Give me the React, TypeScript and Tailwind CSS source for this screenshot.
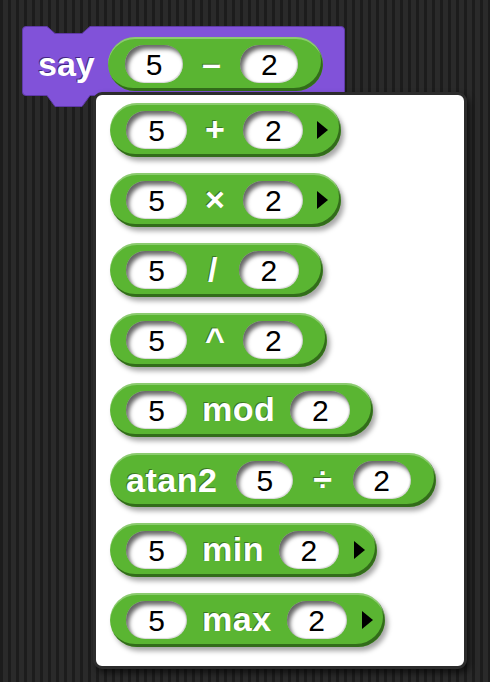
import type { ReactNode } from 'react'

function Slot({ v, w = 'w-[61px]' }: { v: string; w?: string }) {
  return (
    <div
      className={`flex h-[38px] ${w} shrink-0 items-center justify-center rounded-full bg-white pt-[1px] text-[30px] leading-none text-black shadow-[inset_3px_4px_4px_rgba(0,0,0,0.6),inset_-1px_-1px_1px_rgba(0,0,0,0.15)]`}
    >
      {v}
    </div>
  )
}

function Label({ children }: { children: ReactNode }) {
  return (
    <span className="text-[34px] font-bold leading-none tracking-[0.5px] text-white [text-shadow:-1px_-1px_0_rgba(0,0,0,0.35)]">
      {children}
    </span>
  )
}

function Arrow() {
  return (
    <svg width="11" height="18" viewBox="0 0 11 18" className="shrink-0">
      <polygon points="0,0 11,9 0,18" fill="#000" />
    </svg>
  )
}

function Reporter({ children, className = '' }: { children: ReactNode; className?: string }) {
  return (
    <div
      className={`flex h-[54px] w-fit items-center rounded-full bg-[#5ab532] shadow-[inset_0_2px_0_rgba(255,255,255,0.3),inset_-2px_-3px_0_rgba(40,90,20,0.8),3px_4px_5px_rgba(0,0,0,0.35)] ${className}`}
    >
      {children}
    </div>
  )
}

function SayBlock() {
  return (
    <div className="relative h-[80px] w-[323px]">
      <svg width="323" height="82" viewBox="0 0 323 82" className="absolute left-0 top-0">
        <path
          d="M0.5,4 Q0.5,0.5 4,0.5 L25,0.5 L33,7.5 L60,7.5 L68,0.5 L319,0.5 Q322.5,0.5 322.5,4 L322.5,66 Q322.5,69.5 319,69.5 L68,69.5 L60,80.5 L33,80.5 L25,69.5 L4,69.5 Q0.5,69.5 0.5,66 Z"
          fill="#8152d9"
          stroke="#5f3aa8"
          strokeWidth="1"
        />
      </svg>
      <div className="relative flex items-center pl-[16px] pt-[11px]">
        <span className="w-[70px] text-[34px] font-bold leading-none text-white [text-shadow:-1px_-1px_0_rgba(60,30,120,0.9)]">
          say
        </span>
        <Reporter className="h-[53px] pl-[17px] pr-[25px] shadow-[inset_0_2px_0_rgba(255,255,255,0.3),inset_-2px_-3px_0_rgba(40,90,20,0.8)]">
          <Slot v="5" w="w-[58px]" />
          <span className="mx-[19px]">
            <Label>–</Label>
          </span>
          <Slot v="2" w="w-[58px]" />
        </Reporter>
      </div>
    </div>
  )
}

export default function App() {
  return (
    <div className="relative h-[682px] w-[490px] overflow-hidden bg-[repeating-linear-gradient(90deg,#1c1c1c_0px,#1c1c1c_3px,#2a2a2a_3px,#2a2a2a_8px)] pl-[22px] pt-[26px] font-['Liberation_Sans',Arial,sans-serif]">
      <SayBlock />

      {/* palette menu */}
      <div className="absolute left-[93px] top-[92px] h-[577px] w-[374px] rounded-[9px] border-[3px] border-[#2c2c2c] bg-white shadow-[3px_4px_6px_rgba(0,0,0,0.6)]">
        <div className="flex flex-col gap-[16px] pl-[14px] pt-[8px]">
          <Reporter className="pl-[16px] pr-[13px]">
            <Slot v="5" />
            <span className="mx-[18px]"><Label>+</Label></span>
            <Slot v="2" w="w-[60px]" />
            <span className="ml-[14px]"><Arrow /></span>
          </Reporter>
          <Reporter className="pl-[16px] pr-[13px]">
            <Slot v="5" />
            <span className="mx-[18px]"><Label>×</Label></span>
            <Slot v="2" w="w-[60px]" />
            <span className="ml-[14px]"><Arrow /></span>
          </Reporter>
          <Reporter className="pl-[16px] pr-[24px]">
            <Slot v="5" />
            <span className="mx-[21px]"><Label>/</Label></span>
            <Slot v="2" w="w-[60px]" />
          </Reporter>
          <Reporter className="pl-[16px] pr-[24px]">
            <Slot v="5" />
            <span className="mx-[18px]"><Label>^</Label></span>
            <Slot v="2" w="w-[60px]" />
          </Reporter>
          <Reporter className="pl-[16px] pr-[23px]">
            <Slot v="5" />
            <span className="mx-[15px]"><Label>mod</Label></span>
            <Slot v="2" w="w-[60px]" />
          </Reporter>
          <Reporter className="pl-[16px] pr-[25px]">
            <Label>atan2</Label>
            <span className="ml-[19px]"><Slot v="5" w="w-[57px]" /></span>
            <span className="mx-[20px]"><Label>÷</Label></span>
            <Slot v="2" w="w-[58px]" />
          </Reporter>
          <Reporter className="pl-[16px] pr-[12px]">
            <Slot v="5" />
            <span className="mx-[15px]"><Label>min</Label></span>
            <Slot v="2" w="w-[60px]" />
            <span className="ml-[15px]"><Arrow /></span>
          </Reporter>
          <Reporter className="pl-[16px] pr-[12px]">
            <Slot v="5" />
            <span className="mx-[15px]"><Label>max</Label></span>
            <Slot v="2" w="w-[60px]" />
            <span className="ml-[15px]"><Arrow /></span>
          </Reporter>
        </div>
      </div>
    </div>
  )
}
